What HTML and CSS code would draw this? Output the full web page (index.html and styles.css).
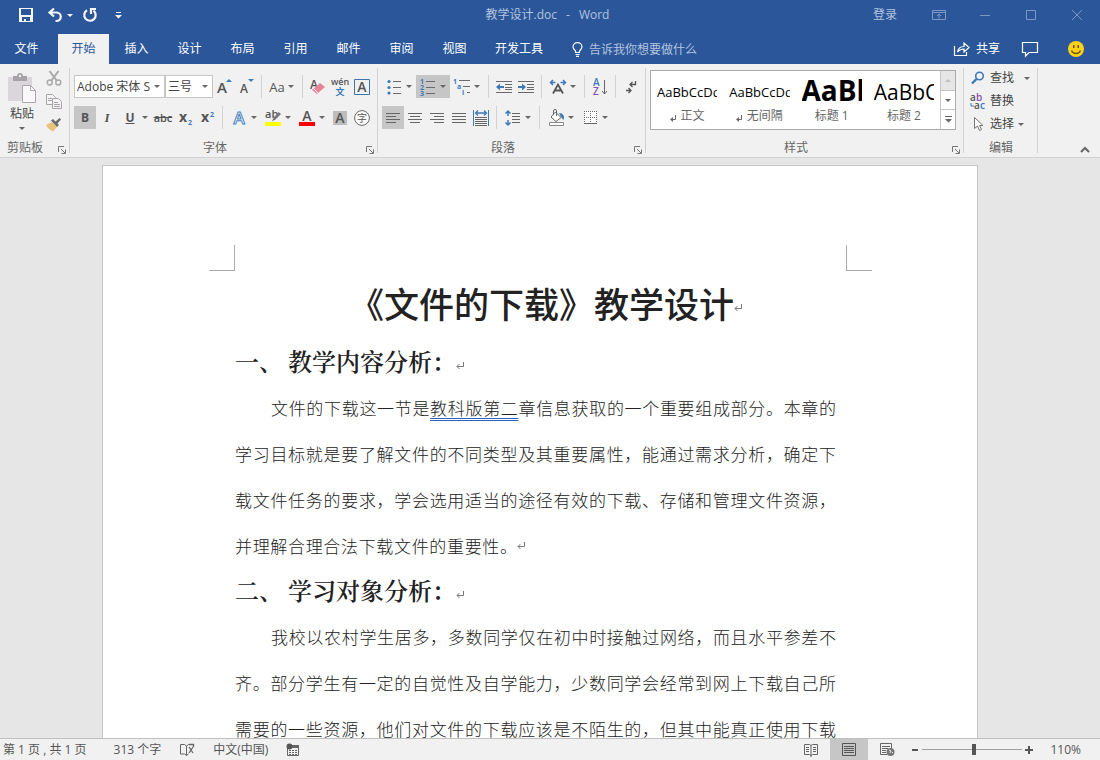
FILE: index.html
```html
<!DOCTYPE html>
<html lang="zh-CN">
<head>
<meta charset="utf-8">
<title>教学设计.doc - Word</title>
<link rel="stylesheet" href="styles.css">
</head>
<body>
<header class="titlebar">
  <div class="quick">
    <button class="qbtn" aria-label="保存"><svg width="16" height="16" viewBox="0 0 16 16"><path d="M1 1h14v14H1z" fill="#f4f6fa"/><path d="M3 2h10v6H3zM4 10h8v4H4z" fill="#2b579a"/><path d="M6 12h2v2H6z" fill="#f4f6fa"/></svg></button>
    <button class="qbtn" aria-label="撤消"><svg width="17" height="16" viewBox="0 0 17 16" fill="none" stroke="#f4f6fa" stroke-width="2.200"><path d="M7 1.500L2.500 5.500 7 9.500M3 5.500h6.500a4.200 4.200 0 0 1 0 8.500H8.500"/></svg></button>
    <button class="qdrop" aria-label="撤消选项"><span class="caret light"></span></button>
    <button class="qbtn" aria-label="重复"><svg width="16" height="16" viewBox="0 0 16 16" fill="none" stroke="#f4f6fa" stroke-width="2.200"><path d="M5 3.200A5.700 5.700 0 1 0 11.500 3.600"/><path d="M9 7V2h5" /></svg></button>
    <button class="qmore" aria-label="自定义快速访问工具栏"><svg width="7" height="8" viewBox="0 0 7 8" fill="#f4f6fa"><path d="M1 1h5v1H1zM0 4h7L3.500 7.500z"/></svg></button>
  </div>
  <div class="doc-name"><span>教学设计.doc</span><span>-</span><span>Word</span></div>
  <div class="window-tools">
    <button class="login">登录</button>
    <button class="wbtn" aria-label="功能区显示选项"><svg width="14" height="12" viewBox="0 0 14 12" fill="none" stroke="#7d98c4"><path d="M.5 1.500h13v9H.5zM.5 3.500h13M7 9.500V5M5 7l2-2 2 2"/></svg></button>
    <button class="wbtn" aria-label="最小化"><svg width="12" height="12" viewBox="0 0 12 12" stroke="#7d98c4"><path d="M1 6.500h10"/></svg></button>
    <button class="wbtn" aria-label="最大化"><svg width="12" height="12" viewBox="0 0 12 12" fill="none" stroke="#7d98c4"><path d="M1.500 1.500h9v9h-9z"/></svg></button>
    <button class="wbtn" aria-label="关闭"><svg width="12" height="12" viewBox="0 0 12 12" stroke="#7d98c4"><path d="M1 1l10 10M11 1L1 11"/></svg></button>
  </div>
</header>

<nav class="tabs">
  <button class="tab file">文件</button>
  <button class="tab active">开始</button>
  <button class="tab">插入</button>
  <button class="tab">设计</button>
  <button class="tab">布局</button>
  <button class="tab">引用</button>
  <button class="tab">邮件</button>
  <button class="tab">审阅</button>
  <button class="tab">视图</button>
  <button class="tab">开发工具</button>
  <label class="tell">
    <svg width="11" height="15" viewBox="0 0 11 15" fill="none" stroke="#fff" stroke-width="1.200"><path d="M3.500 10.500V9C2 7.500 1 6.500 1 5a4.500 4.300 0 0 1 9 0c0 1.500-1 2.500-2.500 4v1.500z"/><path d="M3.500 12.500h4M4 14.300h3"/></svg>
    <input type="text" placeholder="告诉我你想要做什么" aria-label="告诉我你想要做什么">
  </label>
  <button class="share"><svg width="17" height="16" viewBox="0 0 17 16" fill="none" stroke="#fff" stroke-width="1.200"><path d="M1.500 5v9.500h12V11"/><path d="M4.500 11c.6-3.600 2.800-5.500 6.500-5.500V2l5 4.500-5 4.500V8C8 8 6 9 4.500 11z"/></svg>共享</button>
  <button class="round" aria-label="批注"><svg width="18" height="16" viewBox="0 0 18 16" fill="none" stroke="#fff" stroke-width="1.200"><path d="M1.500 1.500h15v10H8L4.500 15v-3.500h-3z"/></svg></button>
  <button class="round smile" aria-label="反馈"><svg width="16" height="16" viewBox="0 0 16 16"><circle cx="8" cy="8" r="8" fill="#fcd116"/><path d="M5 4h1.500v3H5zM9.500 4H11v3H9.500z" fill="#6b5410"/><path d="M3.500 9.500c1.500 4 7.500 4 9 0" fill="none" stroke="#6b5410" stroke-width="1.300"/></svg></button>
</nav>

<section class="ribbon">
  <div class="group clipboard">
    <div class="clip-body">
      <button class="paste">
        <svg width="30" height="31" viewBox="0 0 30 31"><path d="M1 4h24v24H1z" fill="#dbd6db"/><path d="M6 3h4c0-4 6-4 6 0h4v5H6z" fill="#a5a3a6"/><circle cx="13" cy="3" r="1.200" fill="#f1f1f1"/><path d="M15.500 12.500h8l5 5v12h-13z" fill="#fbf8fb" stroke="#aaa6ab"/><path d="M23.500 12.500v5h5" fill="none" stroke="#aaa6ab"/></svg>
        <span>粘贴</span><span class="caret"></span>
      </button>
      <div class="clip-side">
        <button aria-label="剪切"><svg width="16" height="16" viewBox="0 0 16 16" fill="none" stroke="#a9a9a9"><path d="M3.500 1L11 11M12.500 1L5 11" stroke-width="2"/><circle cx="3.700" cy="12.500" r="2.500" stroke-width="1.400"/><circle cx="12.300" cy="12.500" r="2.500" stroke-width="1.400"/></svg></button>
        <button aria-label="复制"><svg width="16" height="15" viewBox="0 0 16 15" fill="#f5f3f5" stroke="#a9a6aa"><path d="M.5.500h6l3 3v7h-9z"/><path d="M2 4.500h4M2 6.500h4"/><path d="M6.500 4.500h6l3 3v7h-9z"/><path d="M8 8.500h4M8 10.500h6M8 12.500h6"/></svg></button>
        <button aria-label="格式刷"><svg width="17" height="15" viewBox="0 0 17 15"><path d="M1 8l6-3 5 5-4 4.500C5 13 2 11 1 8z" fill="#ebc27b"/><path d="M6 3.500l2-1.500 6 6-2 2z" fill="#6b6b6b"/><path d="M10 5l4.500-4L16 2.500 12 7z" fill="#6b6b6b"/></svg></button>
      </div>
    </div>
    <div class="group-foot"><span>剪贴板</span><button class="launch" aria-label="剪贴板选项"><svg width="8" height="8" viewBox="0 0 8 8" fill="none" stroke="#777"><path d="M.5 6V.5H6M3 3l4 4M7.500 3.500v4h-4"/></svg></button></div>
  </div>

  <div class="group font">
    <div class="row">
      <div class="combo name"><select aria-label="字体"><option>Adobe 宋体 Std L</option></select><span class="caret"></span></div>
      <div class="combo size"><select aria-label="字号"><option>三号</option></select><span class="caret"></span></div>
      <button class="b" aria-label="增大字号"><svg width="16" height="16" viewBox="0 0 16 16"><text x="1" y="14" class="t15">A</text><path d="M10 3l3-3 3 3z" fill="#3e7ab8"/></svg></button>
      <button class="b" aria-label="减小字号"><svg width="16" height="16" viewBox="0 0 16 16"><text x="2" y="14" class="t12">A</text><path d="M10 0h6l-3 3z" fill="#3e7ab8"/></svg></button>
      <i class="sep"></i>
      <button class="b drop aa"><span>Aa</span><span class="caret"></span></button>
      <i class="sep"></i>
      <button class="b" aria-label="清除所有格式"><svg width="16" height="16" viewBox="0 0 16 16"><text x="0" y="10" class="t12">A</text><path d="M2 11l8-7 5 4-8 7z" fill="#e8849a"/><path d="M3.500 9.500l5 5" stroke="#f1f1f1"/></svg></button>
      <button class="b" aria-label="拼音指南"><svg width="18" height="18" viewBox="0 0 18 18"><text x="9" y="7" text-anchor="middle" class="t9">wén</text><text x="9" y="17" text-anchor="middle" class="t9 blue">文</text></svg></button>
      <button class="b" aria-label="字符边框"><svg width="16" height="16" viewBox="0 0 16 16"><path d="M.5.500h15v15H.5z" fill="none" stroke="#3e74ad"/><text x="8" y="13" text-anchor="middle" class="t14">A</text></svg></button>
    </div>
    <div class="row">
      <button class="b on bold">B</button>
      <button class="b italic">I</button>
      <button class="b drop bold"><u>U</u><span class="caret"></span></button>
      <button class="b strike">abc</button>
      <button class="b bold" aria-label="下标"><svg width="16" height="16" viewBox="0 0 16 16"><text x="2" y="12" class="t13">x</text><text x="11" y="15" class="t7">2</text></svg></button>
      <button class="b bold" aria-label="上标"><svg width="16" height="16" viewBox="0 0 16 16"><text x="2" y="12" class="t13">x</text><text x="11" y="7" class="t7">2</text></svg></button>
      <i class="sep"></i>
      <button class="b drop" aria-label="文本效果"><svg width="18" height="18" viewBox="0 0 18 18"><text x="9" y="15" text-anchor="middle" class="glow">A</text></svg><span class="caret"></span></button>
      <button class="b drop" aria-label="突出显示"><svg width="18" height="18" viewBox="0 0 18 18"><text x="1" y="9" class="t11">ab</text><path d="M14.500 3L17 5l-6 6-3 1 1.500-3z" fill="#777"/><path d="M1 13h16v4H1z" fill="#ff0"/></svg><span class="caret"></span></button>
      <button class="b drop" aria-label="字体颜色"><svg width="18" height="18" viewBox="0 0 18 18"><text x="9" y="12" text-anchor="middle" class="t14">A</text><path d="M1 13h16v4H1z" fill="#f00"/></svg><span class="caret"></span></button>
      <button class="b" aria-label="字符底纹"><svg width="14" height="14" viewBox="0 0 14 14"><path d="M0 0h14v14H0z" fill="#bdbdbd"/><text x="7" y="12" text-anchor="middle" class="t14">A</text></svg></button>
      <button class="b" aria-label="带圈字符"><svg width="16" height="16" viewBox="0 0 16 16"><circle cx="8" cy="8" r="7.400" fill="#fff" stroke="#666"/><text x="8" y="12" text-anchor="middle" class="t10 thin">字</text></svg></button>
    </div>
    <div class="group-foot"><span>字体</span><button class="launch" aria-label="字体选项"><svg width="8" height="8" viewBox="0 0 8 8" fill="none" stroke="#777"><path d="M.5 6V.5H6M3 3l4 4M7.500 3.500v4h-4"/></svg></button></div>
  </div>

  <div class="group para">
    <div class="row">
      <button class="b drop" aria-label="项目符号"><svg width="14" height="16" viewBox="0 0 14 16"><g fill="#3e7ab8"><circle cx="2" cy="2.500" r="1.600"/><circle cx="2" cy="8.500" r="1.600"/><circle cx="2" cy="14" r="1.600"/></g><path d="M6 2.500h8M6 8.500h8M6 14.500h8" stroke="#6a6a6a"/></svg><span class="caret"></span></button>
      <button class="b drop on" aria-label="编号"><svg width="16" height="18" viewBox="0 0 16 18"><text x="0" y="6" class="t7">1</text><text x="0" y="12" class="t7">2</text><text x="0" y="18" class="t7">3</text><path d="M6 3.500h9M6 9.500h9M6 15.500h9" stroke="#6a6a6a"/></svg><span class="caret"></span></button>
      <button class="b drop" aria-label="多级列表"><svg width="18" height="18" viewBox="0 0 18 18"><text x="0" y="6" class="t7">1</text><text x="4" y="11" class="t7">a</text><text x="9" y="17" class="t7">i</text><path d="M6 2.500h11M10 8.500h7M14 14.500h3" stroke="#6a6a6a"/></svg><span class="caret"></span></button>
      <i class="sep"></i>
      <button class="b" aria-label="减少缩进量"><svg width="16" height="14" viewBox="0 0 16 14"><path d="M0 1.500h16M9 4.500h7M9 7.500h7M9 9.500h7M0 12.500h16" stroke="#6a6a6a"/><path d="M0 7l4-3.500V6h4v2H4v2.500z" fill="#3e7ab8"/></svg></button>
      <button class="b" aria-label="增加缩进量"><svg width="16" height="14" viewBox="0 0 16 14"><path d="M0 1.500h16M9 4.500h7M9 7.500h7M9 9.500h7M0 12.500h16" stroke="#6a6a6a"/><path d="M8 7L4 3.500V6H0v2h4v2.500z" fill="#3e7ab8"/></svg></button>
      <i class="sep"></i>
      <button class="b drop" aria-label="中文版式"><svg width="18" height="16" viewBox="0 0 18 16"><path d="M4 14.500l5-9 5 9M6 11.500h6" fill="none" stroke="#555" stroke-width="1.800"/><path d="M6.500 3.500H2M4 1L1.500 3.500 4 6M11.500 3.500H16M14 1l2.500 2.500L14 6" fill="none" stroke="#3e7ab8" stroke-width="1.500"/></svg><span class="caret"></span></button>
      <i class="sep"></i>
      <button class="b" aria-label="排序"><svg width="16" height="18" viewBox="0 0 16 18"><text x="1" y="8" class="t10 blue">A</text><text x="1" y="17" class="t10 purple">Z</text><path d="M12.500 2v14M10 13l2.500 3 2.500-3" fill="none" stroke="#666"/></svg></button>
      <i class="sep"></i>
      <button class="b" aria-label="显示编辑标记"><svg width="12" height="14" viewBox="0 0 12 14" fill="none" stroke="#555" stroke-width="1.300"><path d="M10.500 1v3.500H5M7.500 2L5 4.500 7.500 7M1 10.500h5M3.500 8L6 10.500 3.500 13"/></svg></button>
    </div>
    <div class="row">
      <button class="b on" aria-label="左对齐"><svg width="14" height="12" viewBox="0 0 14 12" stroke="#666"><path d="M0 1.500h14M0 4.500h10M0 7.500h14M0 10.500h10"/></svg></button>
      <button class="b" aria-label="居中"><svg width="14" height="12" viewBox="0 0 14 12" stroke="#666"><path d="M0 1.500h14M2 4.500h10M0 7.500h14M2 10.500h10"/></svg></button>
      <button class="b" aria-label="右对齐"><svg width="14" height="12" viewBox="0 0 14 12" stroke="#666"><path d="M0 1.500h14M4 4.500h10M0 7.500h14M4 10.500h10"/></svg></button>
      <button class="b" aria-label="两端对齐"><svg width="14" height="12" viewBox="0 0 14 12" stroke="#666"><path d="M0 1.500h14M0 4.500h14M0 7.500h14M0 10.500h14"/></svg></button>
      <button class="b" aria-label="分散对齐"><svg width="16" height="16" viewBox="0 0 16 16"><path d="M.5 0v16M15.500 0v16" stroke="#3e7ab8"/><path d="M2 7.500h12M2 9.500h12M2 11.500h12M2 13.500h12M2 15.500h12" stroke="#666"/><path d="M3 3h10M5 .5L2.500 3 5 5.500M11 .5L13.500 3 11 5.500" fill="none" stroke="#3e7ab8" stroke-width="1.300"/></svg></button>
      <i class="sep"></i>
      <button class="b drop" aria-label="行距"><svg width="16" height="16" viewBox="0 0 16 16"><path d="M7 3.500h8M7 6.500h8M7 9.500h8M7 12.500h8" stroke="#666"/><path d="M3 1v5M.5 3.500L3 1l2.500 2.500M3 15v-5M.5 12.500L3 15l2.500-2.500" fill="none" stroke="#3e7ab8" stroke-width="1.500"/></svg><span class="caret"></span></button>
      <i class="sep"></i>
      <button class="b drop" aria-label="底纹"><svg width="17" height="17" viewBox="0 0 17 17"><path d="M7.500 3L13 8.500l-5 4L3 8z" fill="#fff" stroke="#666"/><path d="M5.500 6V2a1.500 1.500 0 0 1 3 0v5" fill="none" stroke="#666"/><path d="M11 4c4 0 6 3 4.500 7L13 8z" fill="#3e7ab8"/><path d="M1.500 13.500h14v3h-14z" fill="#fff" stroke="#888"/></svg><span class="caret"></span></button>
      <button class="b drop" aria-label="边框"><svg width="13" height="13" viewBox="0 0 13 13"><path d="M0 0h13v13H0z" fill="#fff"/><path d="M0 .5h13M0 6.500h13M.5 0v13M6.500 0v13M12.500 0v13" stroke="#666" stroke-dasharray="1 1"/><path d="M0 12.500h13" stroke="#666"/></svg><span class="caret"></span></button>
    </div>
    <div class="group-foot"><span>段落</span><button class="launch" aria-label="段落选项"><svg width="8" height="8" viewBox="0 0 8 8" fill="none" stroke="#777"><path d="M.5 6V.5H6M3 3l4 4M7.500 3.500v4h-4"/></svg></button></div>
  </div>

  <div class="group styles">
    <div class="gallery">
      <button class="style"><span class="sample">AaBbCcDd</span><span class="cap"><svg class="mini" width="7" height="7" viewBox="0 0 7 7"><path d="M5.500 0v4.500H2" fill="none" stroke="#666"/><path d="M0 4.500L3 2v5z" fill="#666"/></svg>正文</span></button>
      <button class="style"><span class="sample">AaBbCcDd</span><span class="cap"><svg class="mini" width="7" height="7" viewBox="0 0 7 7"><path d="M5.500 0v4.500H2" fill="none" stroke="#666"/><path d="M0 4.500L3 2v5z" fill="#666"/></svg>无间隔</span></button>
      <button class="style"><span class="sample h1">AaBb</span><span class="cap">标题 1</span></button>
      <button class="style"><span class="sample h2">AaBbC</span><span class="cap">标题 2</span></button>
      <div class="scroller">
        <button class="off" aria-label="上一行"><span class="caret up"></span></button>
        <button aria-label="下一行"><span class="caret"></span></button>
        <button aria-label="其他样式"><svg width="7" height="7" viewBox="0 0 7 7" fill="#666"><path d="M0 0h7v1H0zM0 3h7L3.500 6.500z"/></svg></button>
      </div>
    </div>
    <div class="group-foot"><span>样式</span><button class="launch" aria-label="样式选项"><svg width="8" height="8" viewBox="0 0 8 8" fill="none" stroke="#777"><path d="M.5 6V.5H6M3 3l4 4M7.500 3.500v4h-4"/></svg></button></div>
  </div>

  <div class="group editing">
    <div class="edit-body">
      <button class="find"><svg width="16" height="14" viewBox="0 0 16 14" fill="none" stroke="#3e7ab8"><circle cx="9.500" cy="5" r="3.800" stroke-width="1.600"/><path d="M6.500 8L2 12.500" stroke-width="2.400"/></svg>查找<span class="caret"></span></button>
      <button><svg width="16" height="16" viewBox="0 0 16 16"><text x="0" y="8" class="t10">a</text><text x="6" y="8" class="t10 purple">b</text><text x="4" y="16" class="t10">a</text><text x="10" y="16" class="t10 blue">c</text><path d="M1 10v3h3" fill="none" stroke="#3e7ab8"/></svg>替换</button>
      <button><svg width="16" height="16" viewBox="0 0 16 16"><path d="M4.500 1.500v11l3-2.500 2 4.500 2-1-2-4h3.500z" fill="#fff" stroke="#777"/></svg>选择<span class="caret"></span></button>
    </div>
    <div class="group-foot"><span>编辑</span></div>
  </div>
  <button class="collapse" aria-label="折叠功能区"><svg width="10" height="7" viewBox="0 0 10 7" fill="none" stroke="#666" stroke-width="2"><path d="M1 6l4-4 4 4"/></svg></button>
</section>

<main class="workspace">
  <article class="page">
    <div class="corners"><i class="corner left"></i><i class="corner right"></i></div>
    <h1>《文件的下载》教学设计<svg class="mark" width="8" height="8" viewBox="0 0 8 8" fill="none" stroke="#777"><path d="M7.500 0v4.500H1M3.500 2L1 4.500 3.500 7"/></svg></h1>
    <h2><span class="num">一、</span>教学内容分析：<svg class="mark" width="8" height="8" viewBox="0 0 8 8" fill="none" stroke="#777"><path d="M7.500 0v4.500H1M3.500 2L1 4.500 3.500 7"/></svg></h2>
    <p>
      <span class="line first">文件的下载这一节是<span class="grammar">教科版第二</span>章信息获取的一个重要组成部分。本章的</span>
      <span class="line">学习目标就是要了解文件的不同类型及其重要属性，能通过需求分析，确定下</span>
      <span class="line">载文件任务的要求，学会选用适当的途径有效的下载、存储和管理文件资源，</span>
      <span class="ending"><span class="line last">并理解合理合法下载文件的重要性。</span><svg class="mark" width="8" height="8" viewBox="0 0 8 8" fill="none" stroke="#777"><path d="M7.500 0v4.500H1M3.500 2L1 4.500 3.500 7"/></svg></span>
    </p>
    <h2><span class="num">二、</span>学习对象分析：<svg class="mark" width="8" height="8" viewBox="0 0 8 8" fill="none" stroke="#777"><path d="M7.500 0v4.500H1M3.500 2L1 4.500 3.500 7"/></svg></h2>
    <p>
      <span class="line first">我校以农村学生居多，多数同学仅在初中时接触过网络，而且水平参差不</span>
      <span class="line">齐。部分学生有一定的自觉性及自学能力，少数同学会经常到网上下载自己所</span>
      <span class="line">需要的一些资源，他们对文件的下载应该是不陌生的，但其中能真正使用下载</span>
    </p>
  </article>
</main>

<footer class="status">
  <span class="pages">第 1 页 , 共 1 页</span>
  <span>313 个字</span>
  <button aria-label="校对"><svg width="16" height="14" viewBox="0 0 16 14" fill="none" stroke="#666"><path d="M7.500 12.500L5.500 11H1.500V1.500h4l2 1.500 2-1.500h1M7.500 3v9.500L9.500 11"/><path d="M10 4l4 6M14 4l-4 6M10 1.500h4.500V4" stroke-width="1.300"/></svg></button>
  <span>中文(中国)</span>
  <button class="macro" aria-label="录制宏"><svg width="14" height="14" viewBox="0 0 14 14"><path d="M1.500 3.500h11v9h-11z" fill="#f1f1f1" stroke="#666"/><path d="M6 2h7v3H6z" fill="#666"/><circle cx="3.500" cy="3.500" r="3" fill="#555"/><path d="M3 7.500h9M3 9.500h9M3 11.500h9" stroke="#666" stroke-dasharray="2 1"/></svg></button>
  <button class="view push" aria-label="阅读视图"><svg width="14" height="14" viewBox="0 0 14 14" fill="none" stroke="#666"><path d="M.5 1.500h5L7 2.500l1.500-1h5v10h-5l-1.500 1-1.500-1h-5zM7 2.500V14M2 4.500h3M2 6.500h3M2 8.500h3M9 4.500h3M9 6.500h3M9 8.500h3"/></svg></button>
  <button class="view on" aria-label="页面视图"><svg width="14" height="14" viewBox="0 0 14 14" fill="none" stroke="#555"><path d="M.5.500h13v12H.5zM2 3.500h10M2 5.500h10M2 7.500h10M2 9.500h10"/></svg></button>
  <button class="view" aria-label="Web 版式视图"><svg width="15" height="14" viewBox="0 0 15 14"><path d="M7 11.500H.5V.5h11V5M2 3.500h8M2 5.500h6M2 7.500h4M2 9.500h4" fill="none" stroke="#666"/><circle cx="10.500" cy="9" r="4" fill="#777"/><path d="M9 7l2 1-1 2M12 9l1 1" stroke="#f1f1f1" fill="none"/></svg></button>
  <button class="zoombtn" aria-label="缩小"><svg width="8" height="8" viewBox="0 0 8 8"><path d="M1 3h6v2H1z" fill="#555"/></svg></button>
  <input class="zoom" type="range" min="0" max="100" value="52" aria-label="缩放">
  <button class="zoombtn" aria-label="放大"><svg width="8" height="8" viewBox="0 0 8 8"><path d="M0 3h3V0h2v3h3v2H5v3H3V5H0z" fill="#555"/></svg></button>
  <span class="percent">110%</span>
</footer>
</body>
</html>
```
FILE: styles.css
```css
* { box-sizing: border-box; }
body {
  margin: 0; height: 100vh; display: flex; flex-direction: column; overflow: hidden;
  background: #e6e6e6; color: #444;
  font: 12px/16px "Open Sans", "Noto Sans CJK SC", sans-serif;
}
button, input, select { font: inherit; color: inherit; border: 0; background: none; padding: 0; margin: 0; }
button { display: flex; align-items: center; justify-content: center; white-space: nowrap; }
svg { display: block; flex: none; overflow: visible; }
svg text { font-family: "Open Sans", "Noto Sans CJK SC", sans-serif; font-weight: 600; fill: #555; }
svg .t15 { font-size: 15px; }
svg .t14 { font-size: 14px; }
svg .t13 { font-size: 14px; font-weight: 700; }
svg .t12 { font-size: 12px; }
svg .t11 { font-size: 11px; }
svg .t10 { font-size: 10px; }
svg .t9 { font-size: 9px; }
svg .t7 { font-size: 7px; font-weight: 700; fill: #3e7ab8; }
svg .thin { font-weight: 400; }
svg .blue { fill: #3e7ab8; }
svg .purple { fill: #8a4fb0; }
svg .glow { font-size: 17px; fill: #fff; stroke: #4a83bf; stroke-width: 1px; }

.caret { flex: none; width: 0; height: 0; border: 3px solid transparent; border-top-color: #666; border-bottom: 0; }
.caret.up { border: 3px solid transparent; border-bottom-color: #c0c0c0; border-top: 0; }
.caret.light { border-top-color: #f4f6fa; }

/* Title bar */
.titlebar { flex: none; height: 34px; background: #2b579a; display: grid; grid-template-columns: 1fr auto 1fr; align-items: center; padding: 0 6px 4px 17px; }
.quick { display: flex; align-items: center; }
.qbtn { width: 18px; height: 22px; margin-right: 11px; }
.qdrop { width: 12px; height: 22px; margin-left: -11px; }
.qdrop + .qbtn { margin-left: 5px; }
.qmore { margin-left: 5px; }
.doc-name { display: flex; gap: 9px; margin-right: 16px; color: #b4c4de; }
.window-tools { display: flex; align-items: center; justify-content: flex-end; color: #b4c4de; }
.login { margin-right: 19px; }
.wbtn { width: 46px; height: 24px; }
.wbtn:last-child { width: 34px; margin-left: 6px; }

/* Tabs */
.tabs { flex: none; height: 30px; background: #2b579a; display: flex; color: #fff; padding-right: 15px; }
.tab { min-width: 51px; margin: 0 1px; padding: 0 13px 1px; }
.tab.file { margin-right: 5px; }
.tab.active { background: #f1f1f1; color: #2b579a; }
.tell { display: flex; align-items: center; gap: 6px; margin-left: 15px; flex: 1; }
.tell input { width: 120px; height: 20px; outline: 0; }
.tell input::placeholder { color: #b4c4de; opacity: 1; }
.share { gap: 6px; padding-bottom: 1px; }
.round { width: 18px; margin-left: 21px; }
.smile { margin-left: 28px; }

/* Ribbon */
.ribbon { flex: none; height: 94px; display: flex; background: #f1f1f1; border-bottom: 1px solid #d2d2d2; }
.group { position: relative; display: flex; flex-direction: column; padding: 11px 4px 0; }
.group::after { content: ""; position: absolute; right: 0; top: 4px; bottom: 4px; width: 1px; background: #d2d2d2; }
.row { display: flex; align-items: center; height: 23px; margin-bottom: 8px; }
.group-foot { display: flex; align-items: center; margin-top: auto; height: 18px; color: #666; }
.group-foot > span { flex: 1; text-align: center; }
.launch { width: 8px; height: 8px; margin: 3px 0 0 10px; }
.sep { flex: none; width: 1px; height: 23px; margin: 0 4px; background: #d2d2d2; }
.b { flex: none; width: 22px; height: 23px; color: #555; }
.b.drop { width: 34px; justify-content: flex-start; }
.b.drop > :first-child { margin: 0 auto; }
.b.drop > .caret { margin-right: 4px; }
.b.drop.aa { width: 32px; font-size: 13px; }
.b.on { background: #c6c6c6; }
.bold { font-weight: 700; }
.italic { font: italic 700 13px/16px "Liberation Serif", serif; }
.strike { font-size: 11px; font-weight: 600; text-decoration: line-through; }

.clipboard { width: 70px; padding-top: 6px; padding-left: 7px; }
.clip-body { display: flex; gap: 7px; }
.paste { flex-direction: column; width: 30px; gap: 2px; }
.paste .caret { margin-top: 3px; }
.clip-side { display: flex; flex-direction: column; gap: 7px; }
.clip-side button { width: 19px; height: 16px; }
.clipboard .group-foot > span { text-align: left; }

.font { width: 308px; }
.combo { display: grid; align-items: center; height: 23px; border: 1px solid #c6c6c6; background: #fff; }
.combo > * { grid-area: 1 / 1; }
.combo .caret { justify-self: end; margin-right: 4px; }
.combo select { appearance: none; width: 100%; height: 21px; padding: 0 14px 0 2px; overflow: hidden; }
.combo.name { width: 91px; }
.combo.size { width: 48px; }
.para { width: 268px; }

.styles { flex: 0 1 318px; min-width: 0; padding-top: 6px; }
.styles .gallery { margin-right: 4px; }
.gallery { display: flex; height: 60px; border: 1px solid #ababab; background: #fff; }
.style { flex: 1; min-width: 0; flex-direction: column; align-items: stretch; justify-content: flex-end; padding: 0 6px 5px; }
.sample { overflow: hidden; white-space: nowrap; text-align: left; color: #000; font-size: 13px; line-height: 16px; margin-bottom: 8px; }
.sample.h1 { font-size: 28px; line-height: 32px; font-weight: 700; margin-bottom: 2px; }
.sample.h2 { font-size: 21px; line-height: 24px; margin-bottom: 4px; }
.cap { display: flex; justify-content: center; align-items: center; gap: 4px; color: #666; }
.mini { margin-top: 4px; }
.scroller { flex: none; width: 15px; display: flex; flex-direction: column; border-left: 1px solid #c6c6c6; }
.scroller button { flex: 1; width: 100%; }
.scroller button + button { border-top: 1px solid #c6c6c6; }
.scroller .off { background: #e6e6e6; }

.editing { width: 74px; padding-top: 6px; }
.edit-body { display: flex; flex-direction: column; gap: 7px; align-items: flex-start; }
.edit-body button { gap: 4px; height: 16px; padding-left: 2px; }
.edit-body .find .caret { margin-left: 6px; }
.collapse { align-self: flex-end; margin: 0 10px 4px auto; }

/* Document */
.workspace { flex: 1; min-height: 0; overflow: hidden; padding: 7px 122px 0 102px; }
.page { min-height: 800px; padding: 79px 105px 0 106px; background: #fff; border: 1px solid #c6c6c6; color: #222; font-family: "Noto Sans CJK SC", sans-serif; }
.corners { display: flex; justify-content: space-between; height: 26px; }
.corner { width: 26px; border-bottom: 1px solid #ababab; }
.corner.left { border-right: 1px solid #ababab; }
.corner.right { border-left: 1px solid #ababab; }
h1, h2, p { margin: 0 36px 0 26px; }
h1 { margin: 0 16px 5px 26px; display: flex; justify-content: center; align-items: center; font-size: 35px; line-height: 64px; font-weight: 500; }
h2 { display: flex; align-items: center; margin-bottom: 4px; font-family: "Noto Serif CJK SC", "Noto Sans CJK SC", serif; font-size: 24px; line-height: 41px; font-weight: 600; }
.num { margin-right: 5px; }
.mark { margin-top: 10px; }
p { font-size: 17px; line-height: 46px; font-weight: 300; }
.line { display: block; white-space: nowrap; text-align: justify; text-align-last: justify; }
.first { padding-left: 36px; }
.ending { display: flex; align-items: center; }
.last { width: 282px; }
.ending .mark { margin-top: 0; }
.grammar { text-decoration: underline double #2b5fc0 1px; text-underline-offset: 3px; }

/* Status bar */
.status { flex: none; height: 22px; display: flex; align-items: center; background: #f1f1f1; border-top: 1px solid #c0c0c0; padding: 0 19px 0 3px; color: #555; }
.status > span + span { margin-left: 19px; }
.status > .pages + span { margin-left: 27px; }
.status button { margin-left: 18px; }
.status button + span { margin-left: 18px; }
.status .view { width: 38px; height: 21px; margin: 0; }
.status .push { margin-left: auto; }
.status .on { background: #c6c6c6; }
.status .zoombtn { width: 8px; margin: 0 3px; }
.status .view + .zoombtn { margin-left: 5px; }
.zoom { appearance: none; width: 100px; height: 16px; background: linear-gradient(#a0a0a0, #a0a0a0) center / 100% 1px no-repeat; }
.zoom::-webkit-slider-thumb { appearance: none; width: 4px; height: 11px; background: #555; }
.status .percent { margin-left: 14px; }
```
